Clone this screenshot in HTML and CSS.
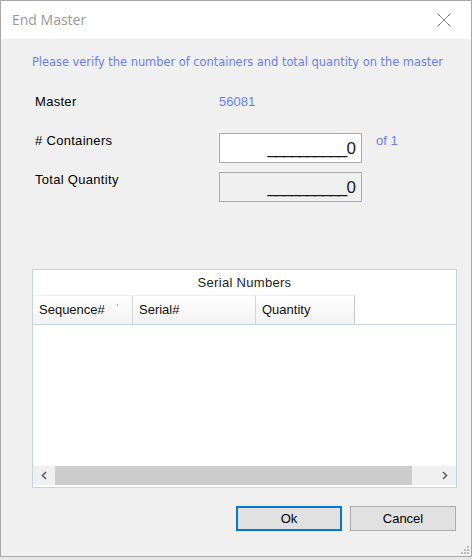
FILE: index.html
```html
<!DOCTYPE html>
<html>
<head>
<meta charset="utf-8">
<link rel="stylesheet" href="styles.css">
</head>
<body>
<div class="window">
  <div class="titlebar">
    <span class="title">End Master</span>
    <svg class="close" width="14" height="14" viewBox="0 0 14 14"><path d="M0.5 0.5 L13.5 13.5 M13.5 0.5 L0.5 13.5" stroke="#8a8a8a" stroke-width="1" fill="none"/></svg>
  </div>
  <div class="content">
    <p class="info">Please verify the number of containers and total quantity on the master</p>
    <div class="form">
      <div class="row">
        <span class="label">Master</span>
        <span class="value">56081</span>
      </div>
      <div class="row">
        <span class="label">#&nbsp;Containers</span>
        <div class="box box-edit"><span class="num"><span class="us">__________</span>0</span></div>
        <span class="of">of 1</span>
      </div>
      <div class="row">
        <span class="label">Total Quantity</span>
        <div class="box box-ro"><span class="num"><span class="us">__________</span>0</span></div>
      </div>
    </div>
    <div class="grid">
      <div class="grid-caption">Serial Numbers</div>
      <div class="grid-head">
        <div class="col col-seq">Sequence# <span class="sort">&#x2032;</span></div>
        <div class="col col-serial">Serial#</div>
        <div class="col col-qty">Quantity</div>
        <div class="col col-rest"></div>
      </div>
      <div class="grid-body"></div>
      <div class="hscroll">
        <div class="arrow arrow-left"><svg width="8" height="9" viewBox="0 0 8 9"><path d="M6 1 L2.5 4.5 L6 8" stroke="#606060" stroke-width="1.6" fill="none"/></svg></div>
        <div class="thumb"></div>
        <div class="track"></div>
        <div class="arrow arrow-right"><svg width="8" height="9" viewBox="0 0 8 9"><path d="M2 1 L5.5 4.5 L2 8" stroke="#606060" stroke-width="1.6" fill="none"/></svg></div>
      </div>
    </div>
    <div class="buttons">
      <button class="btn btn-default">Ok</button>
      <button class="btn">Cancel</button>
    </div>
    <div class="grip">
      <svg width="10" height="10" viewBox="0 0 10 10" fill="#bcbcbc">
        <rect x="8" y="0" width="2" height="2"/>
        <rect x="5" y="3" width="2" height="2"/><rect x="8" y="3" width="2" height="2"/>
        <rect x="2" y="6" width="2" height="2"/><rect x="5" y="6" width="2" height="2"/><rect x="8" y="6" width="2" height="2"/>
      </svg>
    </div>
  </div>
</div>
<div class="below"></div>
</body>
</html>
```
FILE: styles.css
```css
* { box-sizing: border-box; }
html, body { margin: 0; padding: 0; }
body {
  width: 472px;
  height: 560px;
  overflow: hidden;
  background: #f0f0f0;
  font-family: "Liberation Sans", Arial, sans-serif;
  font-size: 13px;
  color: #000;
}
.window {
  width: 472px;
  height: 557px;
  border: 1px solid #a8a8a8;
  display: flex;
  flex-direction: column;
  background: #f0f0f0;
}
.titlebar {
  height: 38px;
  background: #fff;
  display: flex;
  align-items: center;
  justify-content: space-between;
  padding: 0 20px 0 11px;
  flex: none;
}
.title {
  font-family: "Open Sans", "Liberation Sans", sans-serif;
  font-size: 14px;
  color: #999;
  margin-top: -1px;
}
.close { margin-top: -1px; }
.content {
  flex: 1;
  position: relative;
  padding: 15px 0 0 31px;
  display: flex;
  flex-direction: column;
}
.info {
  margin: 0;
  font-family: "DejaVu Sans", sans-serif;
  font-size: 11.4px;
  color: #6a7ef0;
  height: 16px;
  line-height: 16px;
}
.form {
  margin-top: 24px;
  padding-left: 3px;
  display: flex;
  flex-direction: column;
}
.row {
  display: flex;
  align-items: flex-start;
  height: 39px;
}
.label {
  width: 184px;
  line-height: 16px;
  letter-spacing: 0.3px;
}
.value { color: #6a7ef0; line-height: 16px; }
.box {
  width: 143px;
  height: 30px;
  border: 1px solid #ababab;
  display: flex;
  align-items: center;
  justify-content: flex-end;
  padding: 1px 5px 0 0;
  font-size: 17px;
}
.box-edit { background: #fff; }
.box-ro { background: #f0f0f0; }
.num { color: #1a1a1a; }
.us { letter-spacing: -1.65px; margin-right: 1px; }
.of {
  color: #6a7ef0;
  margin-left: 14px;
  line-height: 16px;
}
.grid {
  margin-top: 58px;
  width: 425px;
  height: 219px;
  border: 1px solid #c6d4e0;
  background: #fff;
  display: flex;
  flex-direction: column;
}
.grid-caption {
  height: 25px;
  text-align: center;
  line-height: 26px;
  color: #222;
  letter-spacing: 0.3px;
}
.grid-head {
  height: 30px;
  display: flex;
  border-bottom: 1px solid #c2d6dc;
}
.col {
  height: 100%;
  padding: 6px 0 0 6px;
  background: linear-gradient(#ffffff, #f2f2f2);
  border-right: 1px solid #d5d5d5;
  border-top: 1px solid #f0f0f0;
  color: #111;
  white-space: nowrap;
}
.col-seq { width: 100px; }
.col-serial { width: 123px; }
.col-qty { width: 99px; border-right: 1px solid #c8c8c8; }
.col-rest { flex: 1; border-right: none; background: #fff; border-top: none; }
.sort { color: #999; font-size: 10px; margin-left: 8px; vertical-align: 2px; }
.grid-body { flex: 1; }
.hscroll {
  height: 19px;
  margin-bottom: 2px;
  display: flex;
  background: #f0f0f0;
  flex: none;
}
.arrow {
  width: 22px;
  display: flex;
  align-items: center;
  justify-content: center;
}
.thumb { width: 357px; background: #cdcdcd; }
.track { flex: 1; }
.buttons {
  margin-top: 18px;
  display: flex;
  justify-content: flex-end;
  gap: 8px;
  width: 424px;
}
.btn {
  width: 106px;
  height: 25px;
  background: #e1e1e1;
  border: 1px solid #adadad;
  font-family: "Liberation Sans", Arial, sans-serif;
  font-size: 13px;
  color: #000;
  padding: 0;
}
.btn-default { border: 2px solid #0078d7; }
.grip {
  position: absolute;
  right: 2px;
  bottom: 2px;
  width: 10px;
  height: 10px;
}
.below { height: 3px; background: #e8e8e8; }
```
